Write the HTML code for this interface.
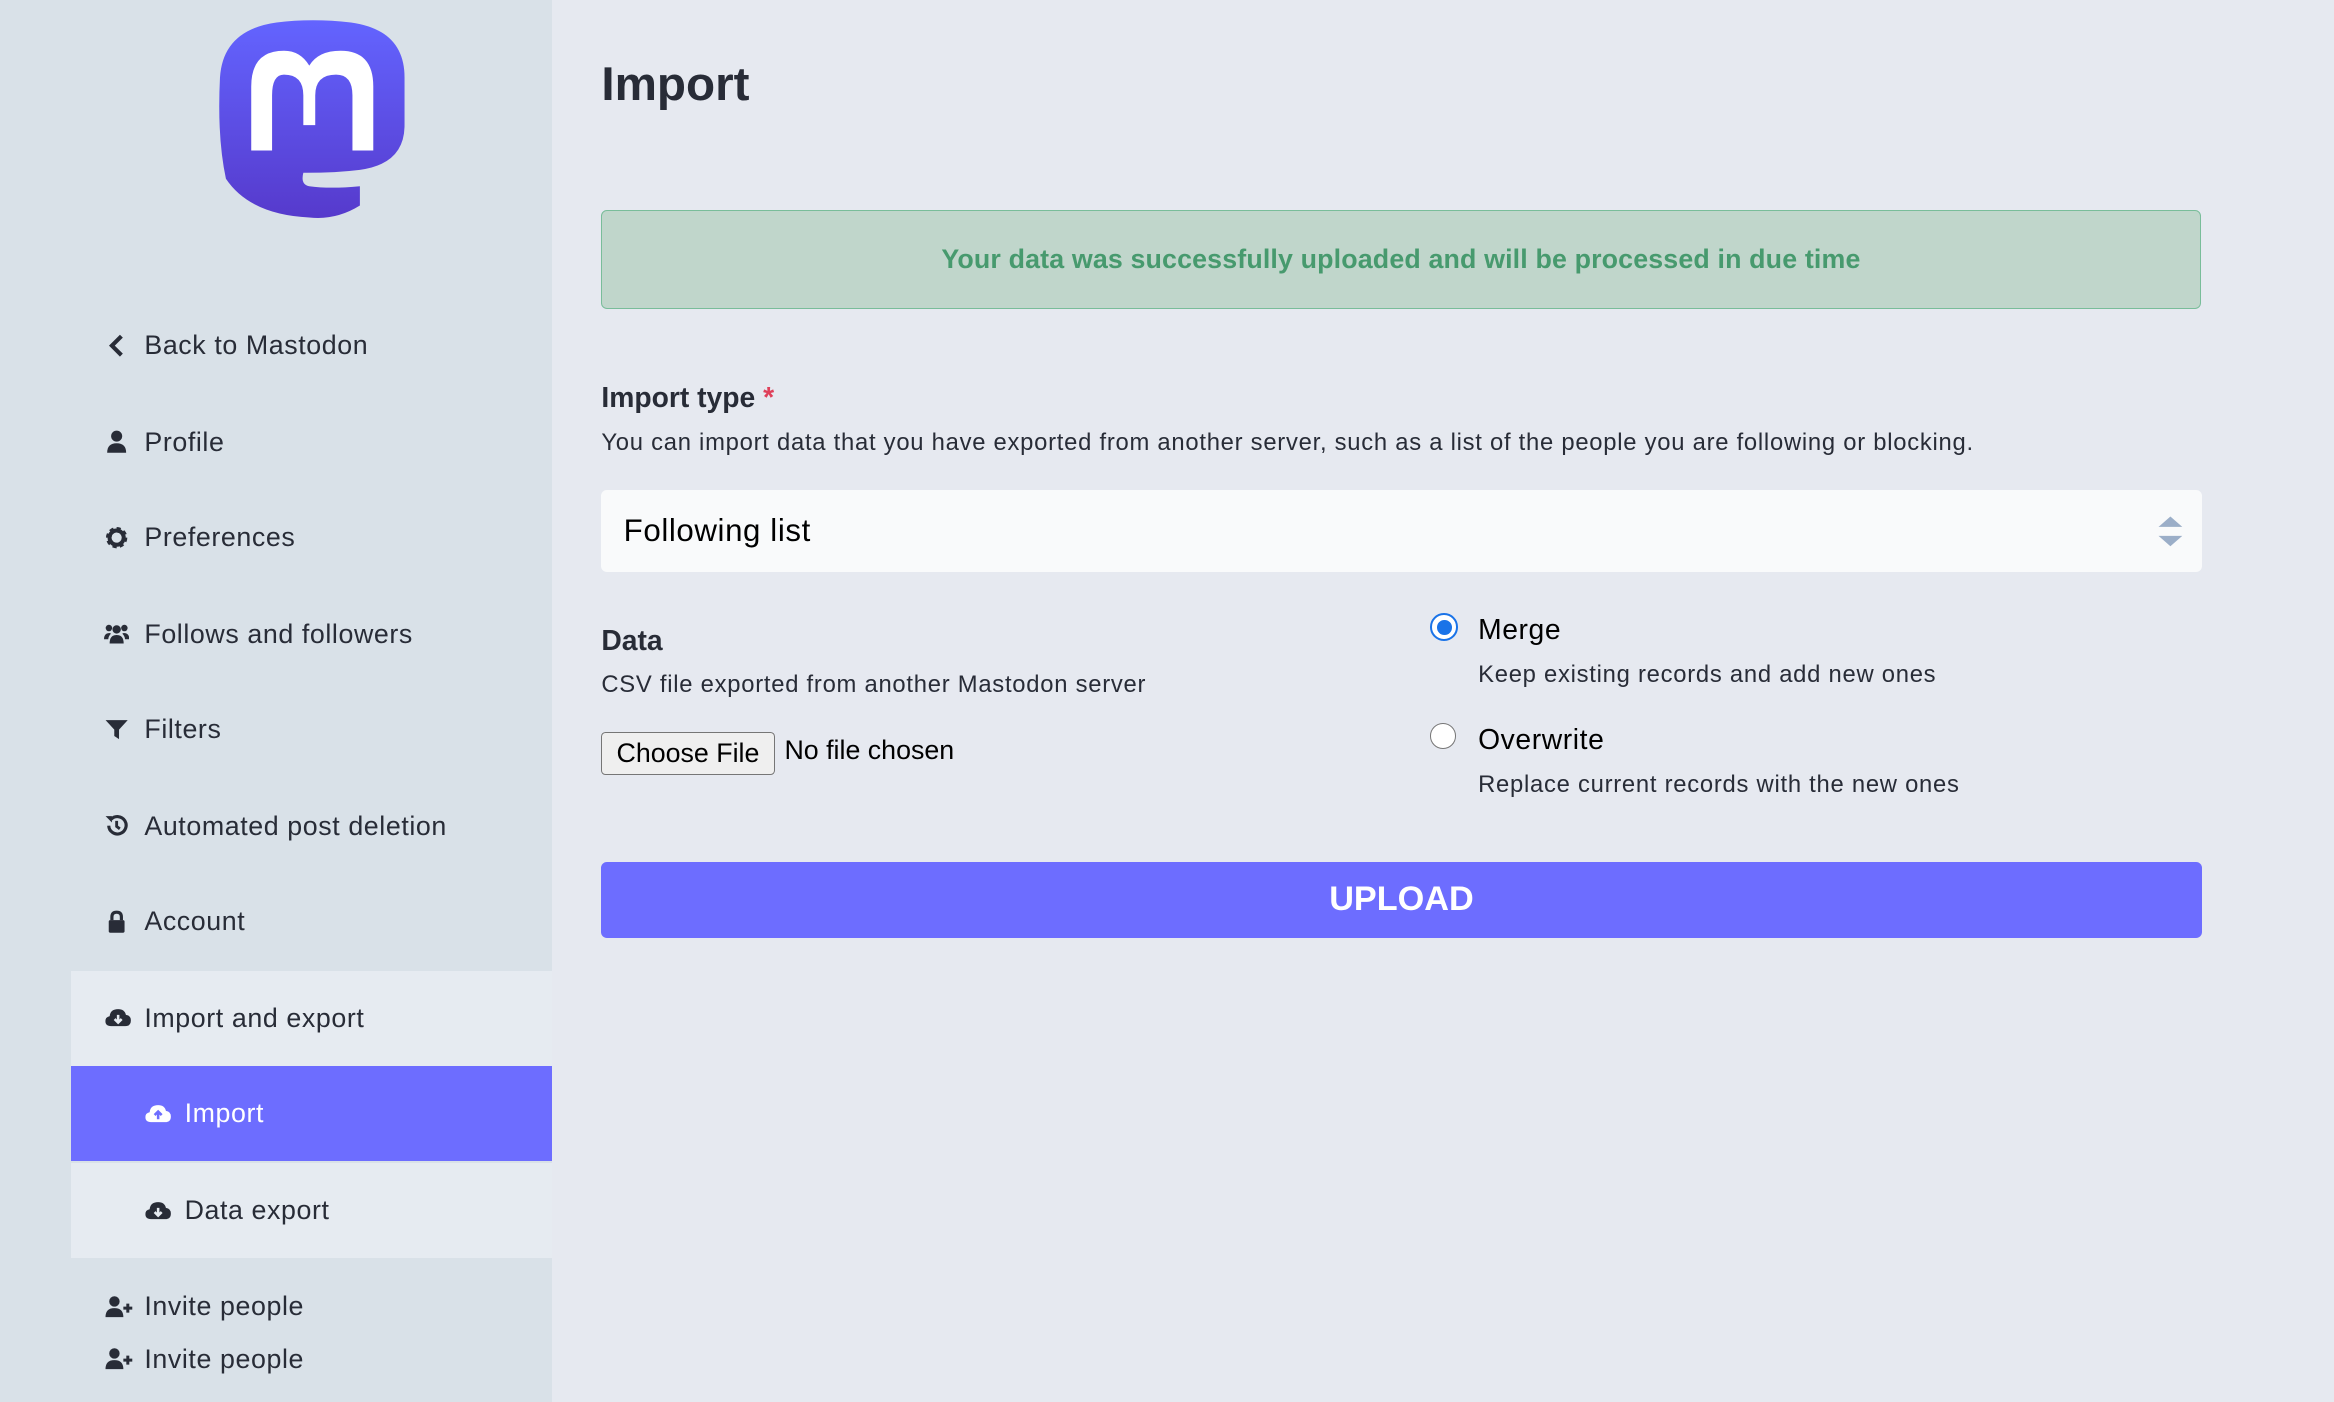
<!DOCTYPE html>
<html><head><meta charset="utf-8"><style>
html,body{margin:0;padding:0;width:2334px;height:1402px;overflow:hidden;background:#e6e9f0;font-family:"Liberation Sans",sans-serif;color:#282c37}
#w{zoom:1.48852;width:1568px;height:942px;position:relative;letter-spacing:0.4px}
#side{position:absolute;left:0;top:0;width:371px;height:942px;background:#d9e1e8}
#main{position:absolute;left:371px;top:0;right:0;height:942px;background:#e6e9f0}
.it{position:absolute;left:48px;width:323px;height:64px;font-size:18px;color:#282c37;display:flex;align-items:center}
.it svg{position:absolute;left:22px;width:17px;height:17px}
.it span{position:absolute;left:49px}
.sub{background:#e6ebf1}
.sub svg{left:49px}.sub span{left:76px}
.act{background:#6d6dff;color:#fff}
h1{position:absolute;left:404px;top:38px;margin:0;font-size:32px;font-weight:bold;color:#282c37;letter-spacing:0}
</style></head><body><div id="w">
<div id="side">
<svg style="position:absolute;left:146px;top:12px" width="128" height="136" viewBox="0 0 128 136">
<defs><linearGradient id="g" x1="0" y1="0" x2="0" y2="1"><stop offset="0" stop-color="#6364ff"/><stop offset="1" stop-color="#563acc"/></linearGradient></defs>
<path d="M40 3 Q64 0 90 3 Q126 8 126 40 L126 72 Q126 98 96 102 Q80 104 60 104 L58 104 Q56 112 62 113 Q76 115 96 113 L96 126 Q80 136 62 134 Q22 132 6 108 Q0 80 2 40 Q4 8 40 3Z" fill="url(#g)"/>
<path d="M23 89 V46 Q23 22 45 22 Q56 22 62 32 Q68 22 83 22 Q105 22 105 46 V89 H91 V52 Q91 38 80 38 Q66 38 66 52 V72 H58 V52 Q58 38 45 38 Q37 38 37 52 V89Z" fill="#fff"/>
</svg>
<div class="it" style="top:200px"><svg viewBox="0 0 16 16"><path d="M11 2 L5 8 L11 14" stroke="#282c37" stroke-width="2.6" fill="none"/></svg><span>Back to Mastodon</span></div>
<div class="it" style="top:265px"><svg viewBox="0 0 16 16"><circle cx="8" cy="4.5" r="3.5" fill="#282c37"/><path d="M2 15 Q2 9 8 9 Q14 9 14 15Z" fill="#282c37"/></svg><span>Profile</span></div>
<div class="it" style="top:329px"><svg viewBox="0 0 16 16"><circle cx="8" cy="8" r="5" fill="none" stroke="#282c37" stroke-width="3.5" stroke-dasharray="2.2 1.7"/><circle cx="8" cy="8" r="4.5" fill="none" stroke="#282c37" stroke-width="2.5"/></svg><span>Preferences</span></div>
<div class="it" style="top:394px"><svg viewBox="0 0 18 16"><circle cx="9" cy="5" r="3" fill="#282c37"/><circle cx="3.5" cy="4" r="2.3" fill="#282c37"/><circle cx="14.5" cy="4" r="2.3" fill="#282c37"/><path d="M4 15 Q4 9 9 9 Q14 9 14 15Z M0 12 Q0 7.5 4 7.5 L5 8 Q3 10 3 12Z M18 12 Q18 7.5 14 7.5 L13 8 Q15 10 15 12Z" fill="#282c37"/></svg><span>Follows and followers</span></div>
<div class="it" style="top:458px"><svg viewBox="0 0 16 16"><path d="M1 2 L15 2 L9.5 8 L9.5 14 L6.5 12 L6.5 8Z" fill="#282c37"/></svg><span>Filters</span></div>
<div class="it" style="top:523px"><svg viewBox="0 0 16 16"><path d="M3 8 A5.5 5.5 0 1 0 4.5 4" stroke="#282c37" stroke-width="2" fill="none"/><path d="M1 2 L5 2 L5 6Z" fill="#282c37"/><path d="M8 5 L8 8.5 L10 10" stroke="#282c37" stroke-width="1.8" fill="none"/></svg><span>Automated post deletion</span></div>
<div class="it" style="top:587px"><svg viewBox="0 0 16 16"><rect x="3" y="7" width="10" height="8" rx="1" fill="#282c37"/><path d="M5 7 L5 5 Q5 2 8 2 Q11 2 11 5 L11 7" stroke="#282c37" stroke-width="2" fill="none"/></svg><span>Account</span></div>
<div class="it sub" style="top:652px"><svg viewBox="0 0 20 16" style="left:22px;width:19px"><path d="M5 14 Q1 14 1 10.5 Q1 7.5 4 7 Q4.5 2 10 2 Q14.5 2 15.5 6 Q19 6.5 19 10 Q19 14 15 14Z" fill="#282c37"/><path d="M10 6 L10 11 M7.5 9 L10 11.5 L12.5 9" stroke="#e6ebf1" stroke-width="1.8" fill="none"/></svg><span style="left:49px">Import and export</span></div>
<div class="it act" style="top:716px"><svg viewBox="0 0 20 16" style="left:49px;width:19px"><path d="M5 14 Q1 14 1 10.5 Q1 7.5 4 7 Q4.5 2 10 2 Q14.5 2 15.5 6 Q19 6.5 19 10 Q19 14 15 14Z" fill="#fff"/><path d="M10 12 L10 7 M7.5 9 L10 6.5 L12.5 9" stroke="#6d6dff" stroke-width="1.8" fill="none"/></svg><span style="left:76px">Import</span></div>
<div class="it sub" style="top:781px"><svg viewBox="0 0 20 16" style="width:19px"><path d="M5 14 Q1 14 1 10.5 Q1 7.5 4 7 Q4.5 2 10 2 Q14.5 2 15.5 6 Q19 6.5 19 10 Q19 14 15 14Z" fill="#282c37"/><path d="M10 6 L10 11 M7.5 9 L10 11.5 L12.5 9" stroke="#e6ebf1" stroke-width="1.8" fill="none"/></svg><span>Data export</span></div>
<div class="it" style="top:846px"><svg viewBox="0 0 20 16" style="width:20px"><circle cx="7" cy="4.5" r="3.5" fill="#282c37"/><path d="M1 15 Q1 9 7 9 Q13 9 13 15Z" fill="#282c37"/><path d="M16 6 L16 12 M13 9 L19 9" stroke="#282c37" stroke-width="2"/></svg><span>Invite people</span></div>
<div class="it" style="top:881px"><svg viewBox="0 0 20 16" style="width:20px"><circle cx="7" cy="4.5" r="3.5" fill="#282c37"/><path d="M1 15 Q1 9 7 9 Q13 9 13 15Z" fill="#282c37"/><path d="M16 6 L16 12 M13 9 L19 9" stroke="#282c37" stroke-width="2"/></svg><span>Invite people</span></div>
</div>
<div id="main"></div>
<h1>Import</h1>
<div style="position:absolute;left:404px;top:141px;width:1073px;height:65px;background:#c0d6cb;border:1px solid #79bd9a;border-radius:4px;color:#479a6e;font-size:18px;font-weight:bold;letter-spacing:0.1px;display:flex;align-items:center;justify-content:center">Your data was successfully uploaded and will be processed in due time</div>
<div style="position:absolute;left:404px;top:256px;font-size:19px;font-weight:bold;letter-spacing:0">Import type <span style="color:#df405a">*</span></div>
<div style="position:absolute;left:404px;top:288px;font-size:16px;color:#282c37;letter-spacing:0.5px">You can import data that you have exported from another server, such as a list of the people you are following or blocking.</div>
<div style="position:absolute;left:404px;top:329px;width:1075px;height:55px;background:#f9fafb;border-radius:4px;font-size:21px;line-height:55px;color:#000"><span style="margin-left:15px">Following list</span>
<svg style="position:absolute;right:12px;top:17px" width="18" height="22" viewBox="0 0 18 22"><path d="M1 8 L9 1 L17 8Z M1 14 L9 21 L17 14Z" fill="#9baec8"/></svg></div>
<div style="position:absolute;left:404px;top:419px;font-size:19px;font-weight:bold;letter-spacing:0">Data</div>
<div style="position:absolute;left:404px;top:451px;font-size:16px;letter-spacing:0.5px">CSV file exported from another Mastodon server</div>
<div style="position:absolute;left:404px;top:492px;width:115px;height:27px;border:1px solid #767676;border-radius:3px;background:#efefef;font-size:18px;line-height:27px;text-align:center;color:#000;letter-spacing:0">Choose File</div>
<div style="position:absolute;left:527px;top:494px;font-size:18px;color:#000;letter-spacing:0">No file chosen</div>
<div style="position:absolute;left:961px;top:412px;width:16px;height:16px;border:1.5px solid #1a73e8;border-radius:50%;background:#fff"><div style="position:absolute;left:3px;top:3px;width:10px;height:10px;border-radius:50%;background:#1a73e8"></div></div>
<div style="position:absolute;left:993px;top:412px;font-size:19px;color:#000;font-weight:500">Merge</div>
<div style="position:absolute;left:993px;top:444px;font-size:16px;letter-spacing:0.5px">Keep existing records and add new ones</div>
<div style="position:absolute;left:961px;top:486px;width:16px;height:16px;border:1px solid #767676;border-radius:50%;background:#fff"></div>
<div style="position:absolute;left:993px;top:486px;font-size:19px;color:#000">Overwrite</div>
<div style="position:absolute;left:993px;top:518px;font-size:16px;letter-spacing:0.5px">Replace current records with the new ones</div>
<div style="position:absolute;left:404px;top:579px;width:1075px;height:51px;background:#6d6dff;border-radius:4px;color:#fff;font-size:23px;font-weight:bold;line-height:51px;text-align:center;letter-spacing:0">UPLOAD</div>
</div></body></html>
